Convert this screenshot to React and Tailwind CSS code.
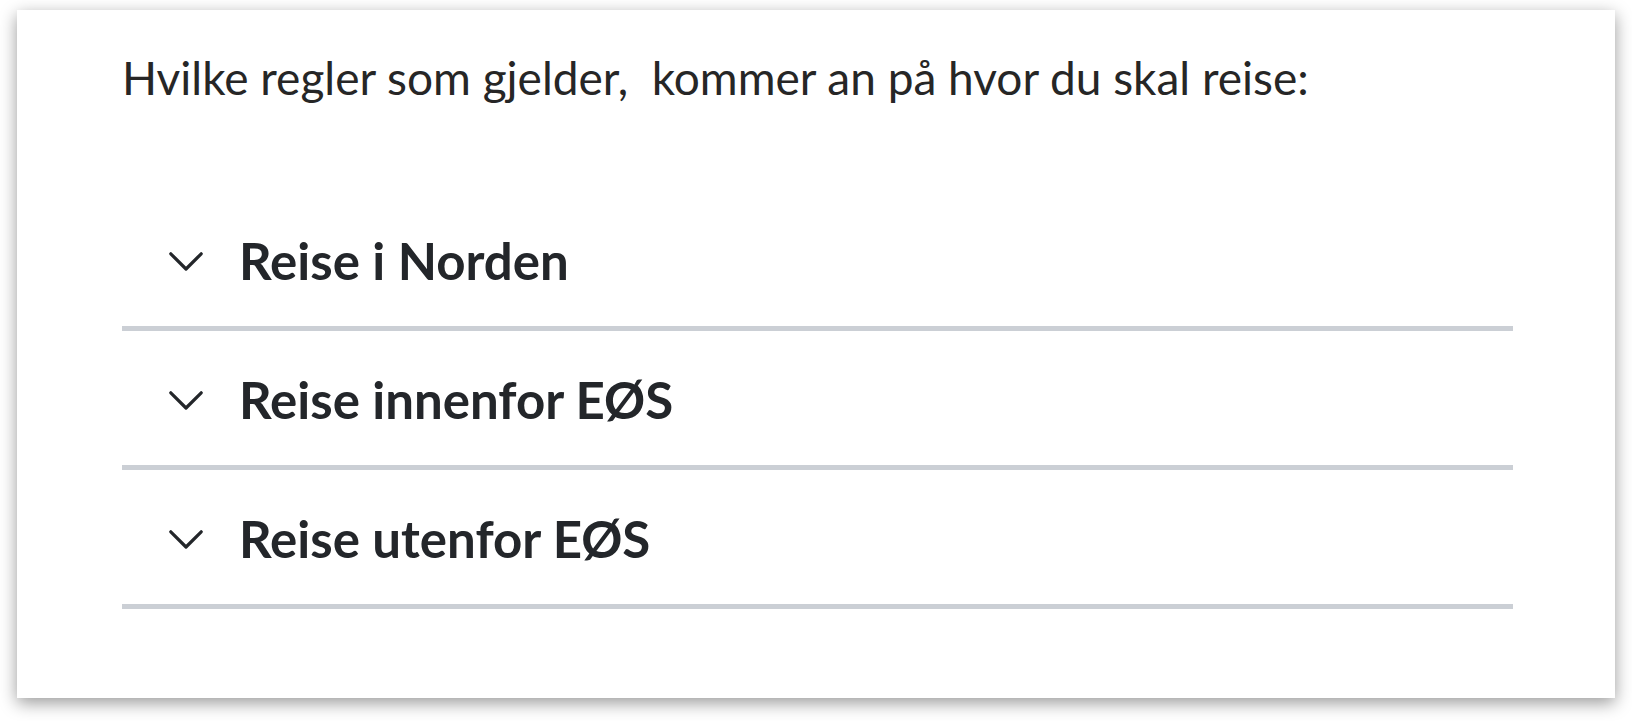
import React from 'react';

const sections = ['Reise i Norden', 'Reise innenfor EØS', 'Reise utenfor EØS'];

const Chevron = () => (
  <svg width="34" height="19" viewBox="0 0 34 19" fill="none" className="shrink-0">
    <polyline
      points="1.8,1.8 17,17 32.2,1.8"
      stroke="#23262a"
      strokeWidth="3.2"
      strokeLinecap="round"
      strokeLinejoin="round"
    />
  </svg>
);

const App = () => {
  return (
    <div className="min-h-screen bg-white pl-[17px] pt-[10px] font-['Lato',sans-serif]">
      <div className="h-[688px] w-[1598px] bg-white pl-[105px] pr-[102px] pt-[38px] shadow-[0_5px_16px_rgba(0,0,0,0.4)]">
        <p className="text-[46px] leading-[60px] text-[#262626]">
          Hvilke regler som gjelder,{'\u00a0'} kommer an på hvor du skal reise:
        </p>

        {/* Nedtrekkslister */}
        <div className="mt-[84px]">
          {sections.map((title) => (
            <button
              key={title}
              className="flex h-[139px] w-full items-center gap-[36px] border-b-[5px] border-[#cbcfd5] pl-[47px] pt-[4px] text-left"
            >
              <Chevron />
              <span className="text-[51px] font-bold leading-[60px] text-[#23262a]">{title}</span>
            </button>
          ))}
        </div>
      </div>
    </div>
  );
};

export default App;
